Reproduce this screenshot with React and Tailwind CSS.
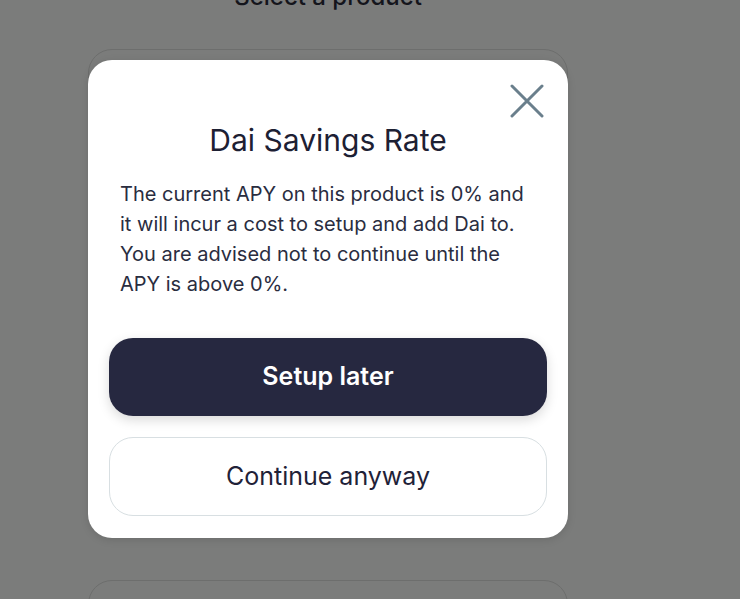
import React from 'react';

const App = () => {
    return (
        <div className="relative h-[599px] w-[740px] overflow-hidden bg-[#7b7c7b] font-['Inter',sans-serif]">
            {/* Page behind the overlay */}
            <div className="flex w-[656px] flex-col items-center">
                <h2 className="-mt-[18px] text-[24px] font-medium leading-[30px] text-[#14151c]">Select a product</h2>
                <div className="mt-[37px] h-[480px] w-[480px] rounded-[24px] border border-[#6d6e6d]"></div>
                <div className="mt-[51px] h-[80px] w-[480px] rounded-[24px] border border-[#6d6e6d]"></div>
            </div>

            {/* Modal */}
            <div className="absolute left-[88px] top-[60px] w-[480px] rounded-[24px] bg-white px-[21px] pb-[22px] pt-[61px] shadow-[0_2px_8px_rgba(0,0,0,0.12)]">
                <button className="absolute right-[24px] top-[24px] h-[34px] w-[34px] text-[#6a7f8c]">
                    <svg viewBox="0 0 34 34" className="h-full w-full" fill="none" stroke="currentColor" strokeWidth="3" strokeLinecap="round">
                        <path d="M2 2L32 32M32 2L2 32" />
                    </svg>
                </button>
                <h1 className="text-center text-[30px] font-normal leading-[38px] text-[#1d2033]">Dai Savings Rate</h1>
                <p className="mt-[20px] px-[11px] text-[20px] leading-[30px] text-[#2a2d3f]">
                    The current APY on this product is 0% and it will incur a cost to setup and add Dai to. You are advised not to continue until the APY is above 0%.
                </p>
                <div className="mt-[39px] flex flex-col gap-[21px]">
                    <button className="h-[78px] w-full rounded-[24px] bg-[#262840] text-[25px] font-semibold text-white shadow-[0_4px_12px_rgba(0,0,0,0.15)]">
                        Setup later
                    </button>
                    <button className="h-[79px] w-full rounded-[24px] border border-[#d8dfe2] bg-white text-[25px] font-normal text-[#1f2238]">
                        Continue anyway
                    </button>
                </div>
            </div>
        </div>
    );
};

export default App;
